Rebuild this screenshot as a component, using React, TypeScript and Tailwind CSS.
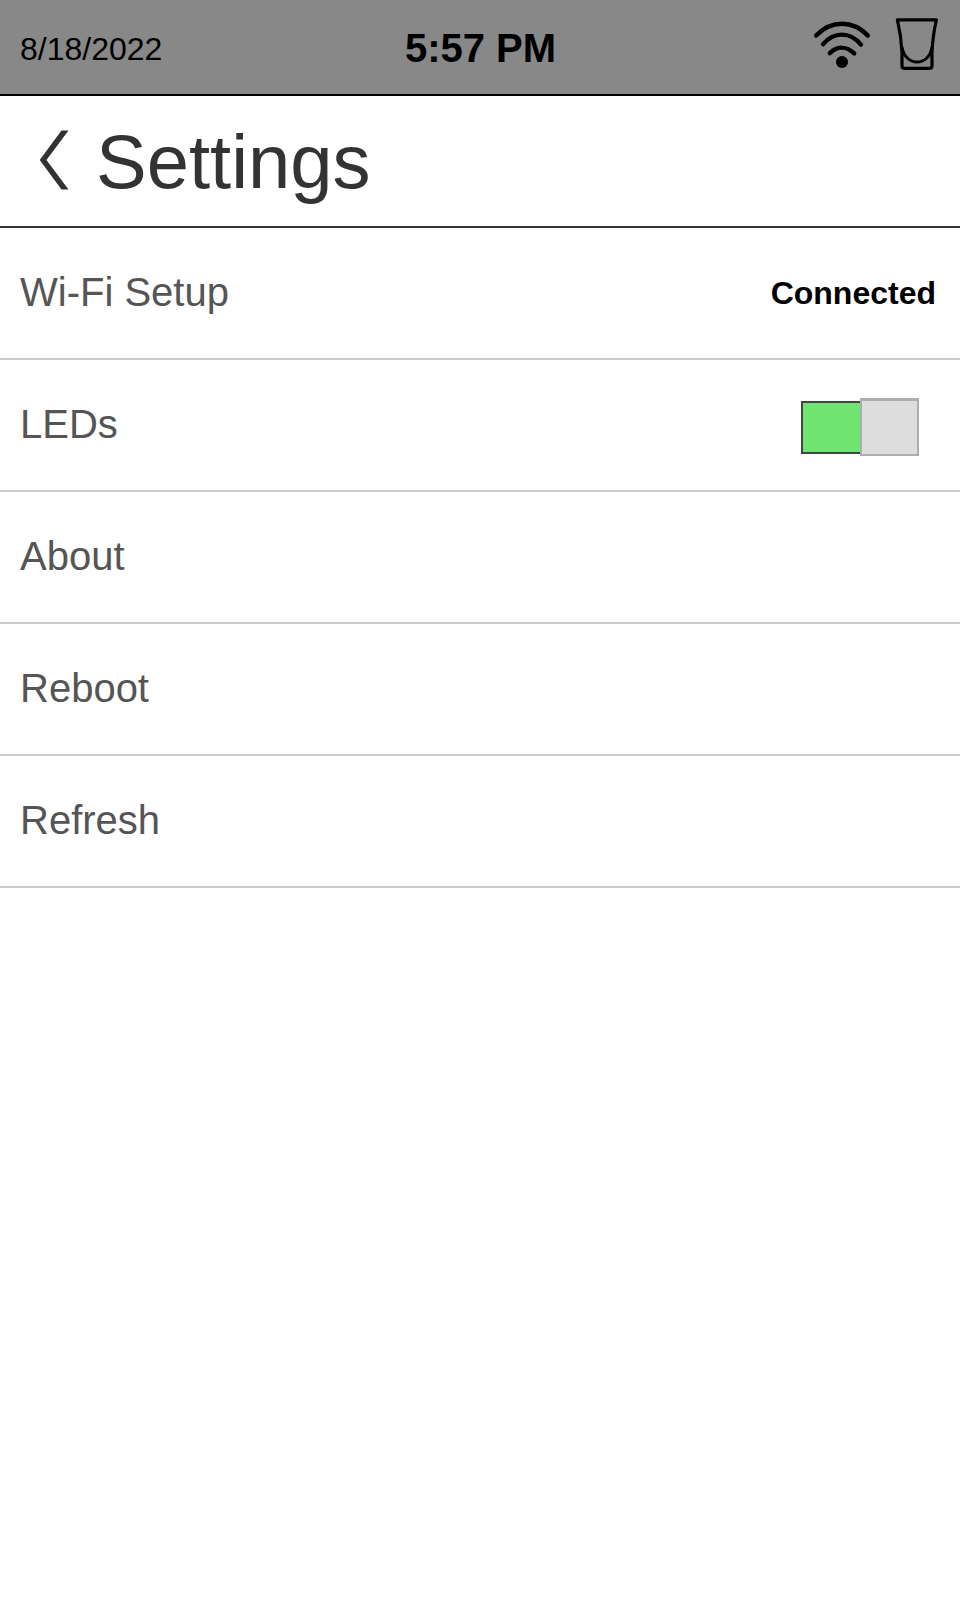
import type { ReactNode } from "react";

function WifiIcon() {
  return (
    <svg width="58" height="50" viewBox="0 0 58 50" fill="none" stroke="#000" strokeWidth="4.4" strokeLinecap="round">
      <path d="M3.200 16.600C18 0.700 40 0.700 54.800 16.600" />
      <path d="M10 25.200C21 12.400 37 12.400 48 25.600" />
      <path d="M16.800 34.200C24.500 27 33.500 27 41.200 34.400" />
      <circle cx="29" cy="43" r="6" fill="#000" stroke="none" />
    </svg>
  );
}

function GlassIcon() {
  return (
    <svg width="44" height="54" viewBox="0 0 44 54" fill="none" stroke="#000" strokeWidth="3.2" strokeLinejoin="round">
      <path d="M2.400 2.800H41.400C38 17 37.600 24 37 35V48.400Q37 51.400 34 51.400H10Q7 51.400 7 48.400V35C6.400 24 5.800 17 2.400 2.800Z" />
      <path d="M7 30C10 50 34.200 50 37 30" strokeWidth="3" />
    </svg>
  );
}

function Toggle() {
  return (
    <div className="mt-1 mr-1 flex h-[58px] w-[118px] items-center">
      <div className="h-[53px] w-[59px] border-2 border-r-0 border-[#444444] bg-[#70e470]" />
      <div className="h-[58px] w-[59px] border-2 border-t-3 border-[#adadad] bg-[#dddddd]" />
    </div>
  );
}

function Row({ label, children }: { label: string; children?: ReactNode }) {
  return (
    <li className="flex h-[132px] items-center justify-between border-b-2 border-[#cccccc] pr-[37px] pl-5">
      <span className="-mt-0.5 text-[40px] leading-none text-[#555555]">{label}</span>
      {children}
    </li>
  );
}

export default function App() {
  return (
    <div className="flex h-[1611px] w-[960px] flex-col overflow-hidden bg-white font-['Liberation_Sans',Arial,sans-serif]">
      <header className="grid h-24 grid-cols-3 items-center border-b-2 border-black bg-[#888888] text-black">
        <span className="pt-1 pl-5 text-[32px] leading-none">8/18/2022</span>
        <span className="pt-0.5 pl-px text-center text-[40px] leading-none font-bold">5:57 PM</span>
        <div className="flex items-start justify-end gap-[24px] pr-[21px] pb-1.5">
          <div className="pt-0.5"><WifiIcon /></div>
          <GlassIcon />
        </div>
      </header>
      <div className="flex h-[132px] items-center border-b-2 border-[#333333] pl-[39px] text-[#333333]">
        <svg className="mb-0.5" width="30" height="60" viewBox="0 0 30 60" fill="currentColor">
          <path d="M22.500 0.500H29.500L7.500 30L29.500 59.500H22.500L0.700 30Z" />
        </svg>
        <h1 className="ml-[27px] pt-0.5 text-[76px] leading-none">Settings</h1>
      </div>
      <ul>
        <Row label="Wi-Fi Setup">
          <span className="-mr-[13px] text-[32px] leading-none font-bold text-black">Connected</span>
        </Row>
        <Row label="LEDs">
          <Toggle />
        </Row>
        <Row label="About" />
        <Row label="Reboot" />
        <Row label="Refresh" />
      </ul>
    </div>
  );
}
